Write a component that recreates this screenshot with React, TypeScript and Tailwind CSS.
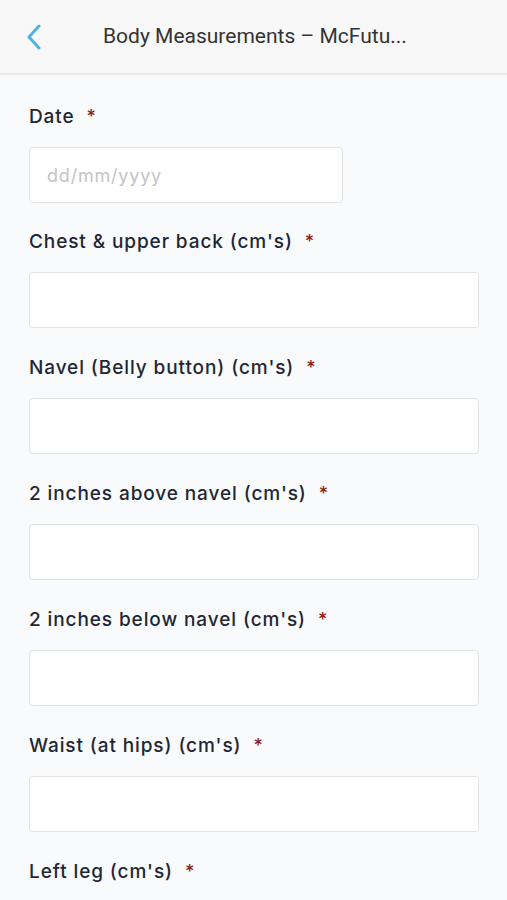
import React from 'react';

// Body measurements form — mobile view
const fields = [
  "Chest & upper back (cm's)",
  "Navel (Belly button) (cm's)",
  "2 inches above navel (cm's)",
  "2 inches below navel (cm's)",
  "Waist (at hips) (cm's)",
  "Left leg (cm's)",
];

const Label = ({ text }: { text: string }) => (
  <div className="flex items-center h-[24px] text-[19px] text-[#1f2733] font-medium leading-[24px] tracking-[0.9px]">
    <span>{text}</span>
    <span className="ml-[12px] text-[#8b1a1a] text-[18px]">*</span>
  </div>
);

export default function App() {
  return (
    <div className="w-[507px] h-[900px] overflow-hidden bg-[#f9fafc]" style={{ fontFamily: 'Inter, "Noto Sans", sans-serif' }}>
      <div className="h-[75px] bg-[#f8f8f8] border-b-2 border-[#e8e8e8] flex items-center">
        <div className="w-[103px] flex items-center pl-[24px]">
          <svg width="20" height="26" viewBox="0 0 20 26" fill="none">
            <path d="M15 2 L5 13 L15 24" stroke="#4fb3e0" strokeWidth="3" strokeLinecap="round" strokeLinejoin="round" />
          </svg>
        </div>
        <div className="text-[21px] text-[#333]" style={{ fontFamily: 'Roboto, "Noto Sans", sans-serif' }}>
          Body Measurements – McFutu...
        </div>
      </div>

      <div className="px-[29px] pt-[30px] flex flex-col">
        <Label text="Date" />
        <div className="mt-[18px] mb-[27px] w-[314px] h-[56px] bg-white border border-[#e3e3e3] rounded-[4px] flex items-center px-[17px] text-[18px] tracking-[0.8px] text-[#c4c4c4]">
          dd/mm/yyyy
        </div>
        {fields.map((f, i) => (
          <div key={f} className="flex flex-col">
            <Label text={f} />
            {i < fields.length - 1 && (
              <div className="mt-[18px] mb-[28px] w-[450px] h-[56px] bg-white border border-[#e3e3e3] rounded-[4px]" />
            )}
          </div>
        ))}
      </div>
    </div>
  );
}
